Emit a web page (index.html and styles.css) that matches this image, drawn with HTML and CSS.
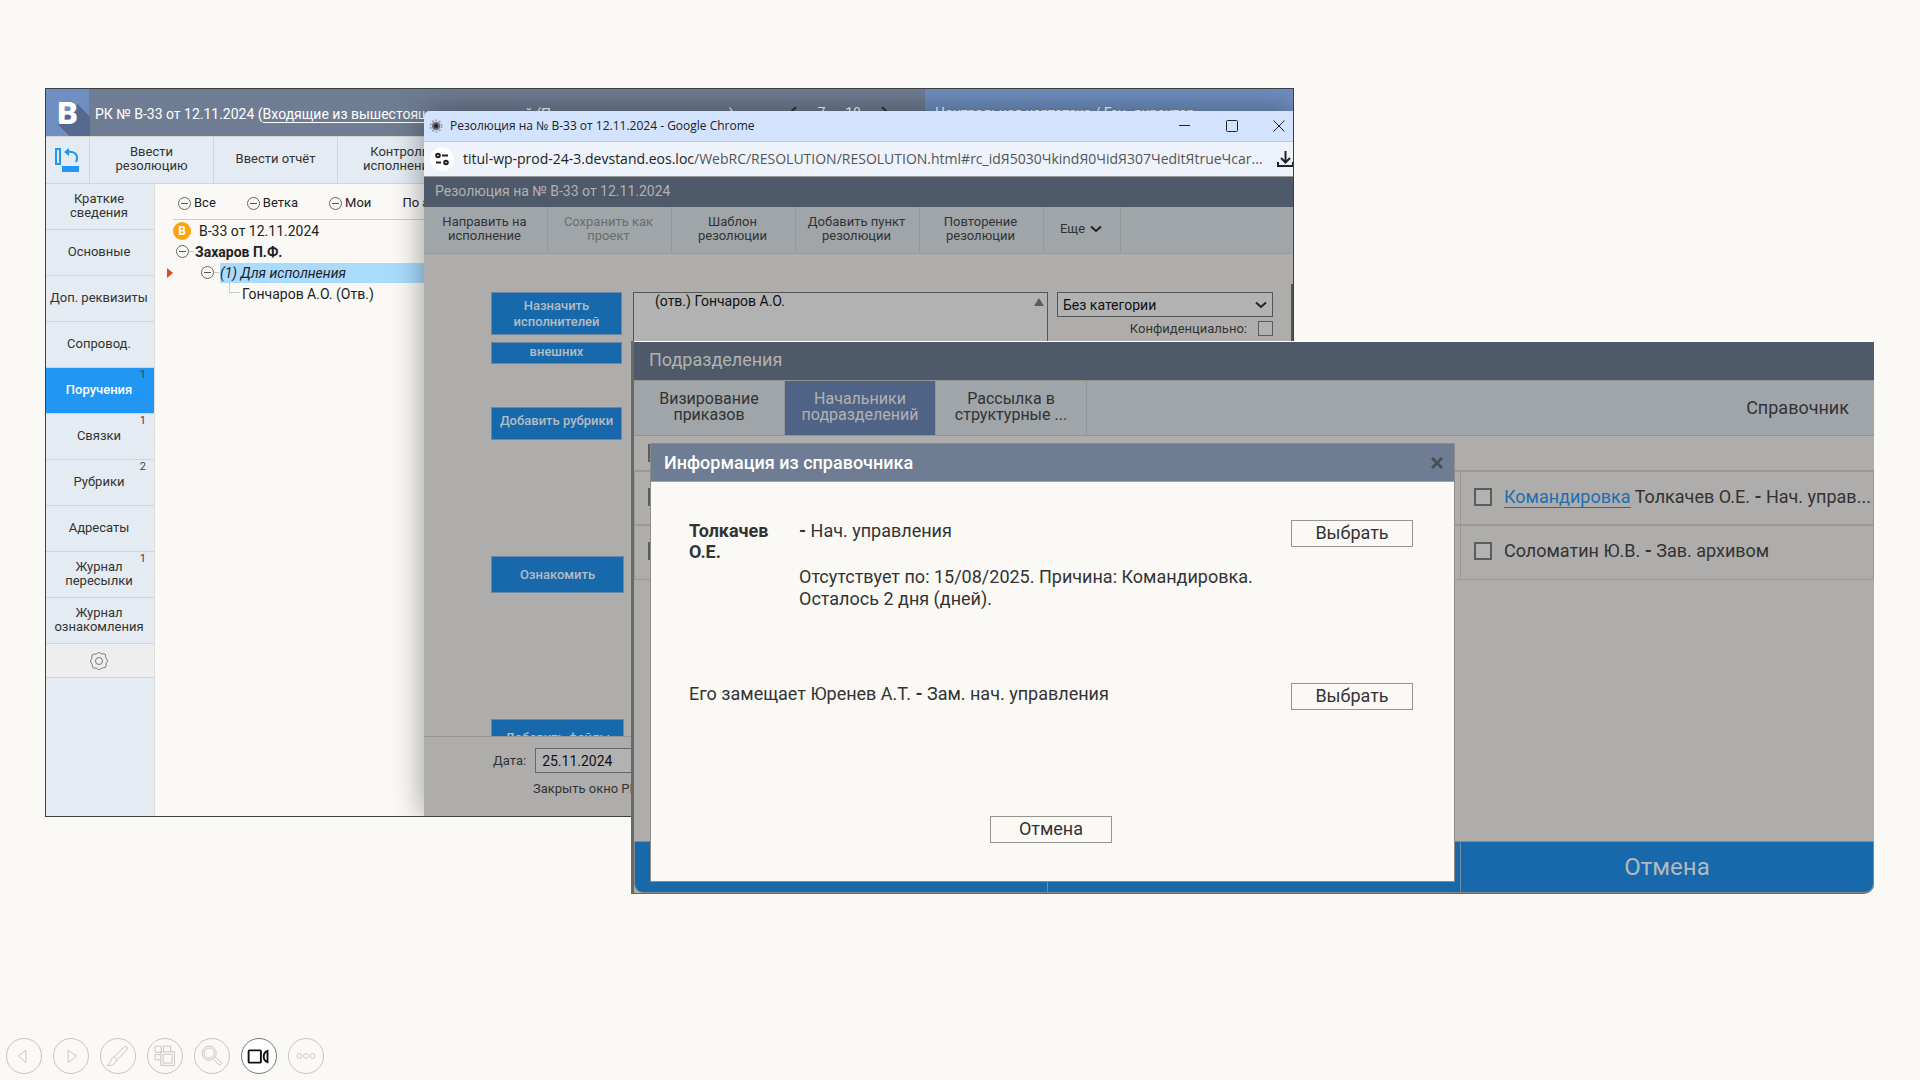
FILE: index.html
```html
<!DOCTYPE html>
<html lang="ru">
<head>
    <meta charset="UTF-8">
    <meta name="viewport" content="width=device-width, initial-scale=1.0">
    <title>Информация из справочника</title>
    <link rel="stylesheet" href="styles.css">
</head>
<body>
    <main class="stage">

        <!-- Registration card window -->
        <section class="card">
            <header class="card-header">
                <div class="logo">
                    <svg viewBox="0 0 43 46" aria-hidden="true"><path d="M31 15 L43 27 V46 H23 L11 34 Z" fill="#55698f"/></svg>
                    <span>В</span>
                </div>
                <p class="card-title">РК № В-33 от 12.11.2024 (<a href="#">Входящие из вышестоящих организаций</a> (Правительство и ведомства)</p>
                <div class="pager">
                    <svg viewBox="0 0 8 14" aria-hidden="true"><path d="M7 1 L1 7 L7 13"/></svg>
                    <span>7</span><span>18</span>
                    <svg viewBox="0 0 8 14" aria-hidden="true"><path d="M1 1 L7 7 L1 13"/></svg>
                </div>
                <p class="cabinet">Центральная картотека / Ген. директор</p>
            </header>

            <div class="card-toolbar">
                <button class="tool-icon" aria-label="Развернуть">
                    <svg viewBox="0 0 26 26" aria-hidden="true">
                        <rect x="2" y="2" width="4" height="15" fill="none" stroke="#2196f3" stroke-width="2"/>
                        <rect x="8" y="19" width="17" height="6" fill="#2196f3"/>
                        <path d="M14 5 C21 4 25 8 22 15" fill="none" stroke="#2196f3" stroke-width="2"/>
                        <path d="M10 5 L15 1 V9 Z" fill="#2196f3"/>
                    </svg>
                </button>
                <button class="tool">Ввести<br>резолюцию</button>
                <button class="tool">Ввести отчёт</button>
                <button class="tool">Контроль<br>исполнения</button>
            </div>

            <div class="card-body">
                <nav class="side">
                    <a href="#">Краткие<br>сведения</a>
                    <a href="#">Основные</a>
                    <a href="#">Доп. реквизиты</a>
                    <a href="#">Сопровод.</a>
                    <a href="#" class="active">Поручения<span class="count">1</span></a>
                    <a href="#">Связки<span class="count">1</span></a>
                    <a href="#">Рубрики<span class="count">2</span></a>
                    <a href="#">Адресаты</a>
                    <a href="#">Журнал<br>пересылки<span class="count">1</span></a>
                    <a href="#">Журнал<br>ознакомления</a>
                    <button class="gear" aria-label="Настройки">
                        <svg viewBox="0 0 20 20" aria-hidden="true">
                            <path d="M8.3 2.4 Q10 .4 11.7 2.4 Q12.8 3.4 14.2 2.7 Q16.8 2.7 16.7 5.2 Q16.3 6.8 17.6 7.8 Q19.6 9.8 17.8 11.5 Q16.6 12.6 17.2 14 Q17.3 16.7 14.7 16.8 Q13.2 16.5 12.2 17.7 Q10.2 19.7 8.4 17.8 Q7.3 16.6 5.8 17.2 Q3.2 17.2 3.2 14.7 Q3.5 13.2 2.3 12.1 Q.4 10 2.3 8.3 Q3.5 7.2 2.8 5.7 Q2.8 3 5.4 3 Q7.2 3.5 8.3 2.4 Z"/>
                            <circle cx="10" cy="10" r="3.5"/>
                        </svg>
                    </button>
                </nav>

                <div class="tree">
                    <div class="filters">
                        <button><i class="minus"></i>Все</button>
                        <button><i class="minus"></i>Ветка</button>
                        <button><i class="minus"></i>Мои</button>
                        <button>По автору</button>
                    </div>
                    <ul class="nodes">
                        <li class="root"><b class="badge">В</b>В-33 от 12.11.2024</li>
                        <li class="author"><i class="minus"></i><i class="dash"></i><strong>Захаров П.Ф.</strong></li>
                        <li class="current"><i class="arrow"></i><i class="minus"></i><i class="dash"></i><em>(1) Для исполнения</em></li>
                        <li class="leaf"><i class="corner"></i>Гончаров А.О. (Отв.)</li>
                    </ul>
                </div>
            </div>

            <!-- Resolution popup -->
            <section class="popup">
                <header class="popup-title">
                    <svg class="favicon" viewBox="0 0 14 14" aria-hidden="true">
                        <circle cx="7" cy="7" r="5.5" fill="none" stroke="#9aa3b3" stroke-width="2" stroke-dasharray="2 1.5"/>
                        <circle cx="7" cy="7" r="4" fill="#66696f"/><circle cx="7" cy="7" r="2" fill="#222"/>
                    </svg>
                    <span>Резолюция на № В-33 от 12.11.2024 - Google Chrome</span>
                    <div class="window-buttons">
                        <button aria-label="Свернуть"><svg viewBox="0 0 12 12"><path d="M0 5.5 H11"/></svg></button>
                        <button aria-label="Развернуть"><svg viewBox="0 0 12 12"><rect x=".5" y=".5" width="11" height="11" rx="1"/></svg></button>
                        <button aria-label="Закрыть"><svg viewBox="0 0 12 12"><path d="M.5 .5 L11.5 11.5 M11.5 .5 L.5 11.5"/></svg></button>
                    </div>
                </header>
                <div class="address">
                    <span class="site-info">
                        <svg viewBox="0 0 14 14" aria-hidden="true"><circle cx="3" cy="3.5" r="1.8"/><path d="M7 3.5 H13 M1 10.5 H6"/><circle cx="11" cy="10.5" r="1.8"/></svg>
                    </span>
                    <span class="url"><b>titul-wp-prod-24-3.devstand.eos.loc</b>/WebRC/RESOLUTION/RESOLUTION.html#rc_idЯ5030ЧkindЯ0ЧidЯ307ЧeditЯtrueЧcar...</span>
                    <svg class="download" viewBox="0 0 18 18" aria-hidden="true"><path d="M8.5 1 V12 M4 8 L8.5 12.5 L13 8 M1 12 V16 H16 V12"/></svg>
                </div>
                <h2 class="popup-heading">Резолюция на № В-33 от 12.11.2024</h2>
                <div class="popup-toolbar">
                    <button>Направить на<br>исполнение</button>
                    <button class="off">Сохранить как<br>проект</button>
                    <button>Шаблон<br>резолюции</button>
                    <button>Добавить пункт<br>резолюции</button>
                    <button>Повторение<br>резолюции</button>
                    <button class="more">Еще <svg viewBox="0 0 12 8" aria-hidden="true"><path d="M1 1.5 L6 6 L11 1.5"/></svg></button>
                </div>
                <div class="popup-form">
                    <div class="form-buttons">
                        <button class="tall">Назначить исполнителей</button>
                        <button class="slim">внешних</button>
                        <button class="rubrics">Добавить рубрики</button>
                        <button class="wide">Ознакомить</button>
                        <button class="wide">Добавить файлы</button>
                    </div>
                    <div class="executors">
                        <textarea aria-label="Исполнители" readonly>(отв.) Гончаров А.О.</textarea>
                        <i class="scroll-up"></i>
                    </div>
                    <div class="options">
                        <div class="category">
                            <select aria-label="Категория"><option>Без категории</option></select>
                            <svg viewBox="0 0 12 8" aria-hidden="true"><path d="M1 1.5 L6 6 L11 1.5"/></svg>
                        </div>
                        <label class="secret">Конфиденциально: <input type="checkbox"></label>
                    </div>
                    <i class="scrollbar"></i>
                </div>
                <footer class="popup-footer">
                    <label>Дата: <input type="text" value="25.11.2024"></label>
                    <p>Закрыть окно РК</p>
                </footer>
            </section>
        </section>

        <!-- Departments dialog -->
        <section class="dialog">
            <h2 class="dialog-title">Подразделения</h2>
            <nav class="tabs">
                <button>Визирование<br>приказов</button>
                <button class="active">Начальники<br>подразделений</button>
                <button>Рассылка в<br>структурные ...</button>
                <a href="#">Справочник</a>
            </nav>
            <div class="select-all"><input type="checkbox" aria-label="Выбрать всех"></div>
            <table class="people">
                <tr>
                    <td><input type="checkbox" aria-label="Сотрудник 1"></td>
                    <td><input type="checkbox" aria-label="Сотрудник 2"></td>
                    <td><input type="checkbox" id="tolkachev"><label for="tolkachev"><a href="#">Командировка</a> Толкачев О.Е. <b>-</b> Нач. управ...</label></td>
                </tr>
                <tr>
                    <td><input type="checkbox" aria-label="Сотрудник 3"></td>
                    <td><input type="checkbox" aria-label="Сотрудник 4"></td>
                    <td><input type="checkbox" id="solomatin"><label for="solomatin">Соломатин Ю.В. <b>-</b> Зав. архивом</label></td>
                </tr>
            </table>
            <footer class="dialog-footer">
                <button aria-label="Выбрать"></button>
                <button aria-label="Добавить"></button>
                <button>Отмена</button>
            </footer>

            <!-- Directory info -->
            <div class="modal">
                <header class="modal-header">
                    <h3>Информация из справочника</h3>
                    <button aria-label="Закрыть"><svg viewBox="0 0 12 12"><path d="M1 1 L11 11 M11 1 L1 11"/></svg></button>
                </header>
                <div class="modal-body">
                    <div class="person">
                        <strong>Толкачев О.Е.</strong>
                        <div class="post">
                            <p><b>-</b> Нач. управления</p>
                            <p>Отсутствует по: 15/08/2025. Причина: Командировка.<br>Осталось 2 дня (дней).</p>
                        </div>
                        <button class="plain">Выбрать</button>
                    </div>
                    <div class="person">
                        <p class="deputy">Его замещает Юренев А.Т. <b>-</b> Зам. нач. управления</p>
                        <button class="plain">Выбрать</button>
                    </div>
                    <button class="plain cancel">Отмена</button>
                </div>
            </div>
        </section>
    </main>

    <!-- Slide show controls -->
    <nav class="controls">
        <button aria-label="Назад"><svg viewBox="0 0 36 36"><path d="M12 18 L20 12 V25 Z"/></svg></button>
        <button aria-label="Вперёд"><svg viewBox="0 0 36 36"><path d="M15 12 L24 18 L15 25 Z"/></svg></button>
        <button aria-label="Перо"><svg viewBox="0 0 36 36"><path d="M27 8 Q29 10 27 12 L17 22 L14 19 L24 9 Q26 7 27 8 Z M14 19 Q10 20 10 24 L7 28 Q14 29 17 22"/></svg></button>
        <button aria-label="Все слайды"><svg viewBox="0 0 36 36"><path d="M13 22 H7.5 V16.5 H13 M7.5 7.5 H14 V14 H7.5 Z M16.5 13 V7.5 H24 V13 M13.5 13.5 H28 V28 H13.5 Z M16 16 H25.5 V25.5 H16 Z"/></svg></button>
        <button aria-label="Увеличить"><svg viewBox="0 0 36 36"><circle cx="15" cy="15" r="7.5"/><circle cx="15" cy="15" r="5.5"/><path d="M19 21 L25 27 Q27 28 28 26 Q28 25 27 24 L21 19"/></svg></button>
        <button class="camera" aria-label="Камера"><svg viewBox="0 0 36 36"><rect x="7" y="12" width="13" height="13" rx="1"/><path d="M27 12.5 V24.5 Q23 23 23 18.5 Q23 14 27 12.5 Z"/></svg></button>
        <button aria-label="Ещё"><svg viewBox="0 0 36 36"><circle cx="11" cy="18" r="2.5"/><circle cx="18" cy="18" r="2.5"/><circle cx="25" cy="18" r="2.5"/></svg></button>
    </nav>
</body>
</html>
```

FILE: styles.css
```css
/* General Styles */
* {
    box-sizing: border-box;
}

body {
    margin: 0;
    min-height: 100vh;
    display: flex;
    flex-direction: column;
    background: #faf9f5;
    color: #333;
    font-family: Roboto, sans-serif;
    font-size: 13px;
    line-height: 14px;
}

h2, h3, p, ul {
    margin: 0;
    padding: 0;
    font-weight: 400;
}

button, input, select, textarea {
    font: inherit;
    color: inherit;
    border-radius: 0;
    margin: 0;
}

button {
    padding: 0;
    border: 0;
    background: none;
    cursor: pointer;
}

a {
    color: inherit;
    text-decoration: none;
}

svg {
    display: block;
}

input[type="checkbox"] {
    appearance: none;
    flex: none;
    width: 18px;
    height: 18px;
    border: 2px solid #5c5c5b;
    background: #b2b2b2;
}

.stage {
    position: relative;
    flex: 1;
}

/* Registration card */
.card {
    position: absolute;
    left: 45px;
    right: 626px;
    top: 88px;
    min-height: 729px;
    display: flex;
    flex-direction: column;
    border: 1px solid #3e3f42;
    overflow: hidden;
}

.card-header {
    display: flex;
    align-items: center;
    height: 47px;
    background: #6f7d94;
    color: #fff;
    font-size: 14px;
    white-space: nowrap;
}

.logo {
    position: relative;
    width: 43px;
    height: 47px;
    background: #6f8fc0;
}

.logo svg {
    height: 47px;
}

.logo span {
    position: absolute;
    inset: 0;
    font-size: 32px;
    font-weight: 900;
    line-height: 48px;
    text-align: center;
}

.card-title {
    flex: 1;
    padding: 2px 0 0 6px;
}

.card-title a {
    border-bottom: 1px solid #fff;
}

.pager {
    display: flex;
    gap: 20px;
    margin-right: 36px;
}

.pager svg {
    width: 8px;
    fill: none;
    stroke: #333;
    stroke-width: 2;
}

.cabinet {
    align-self: stretch;
    width: 368px;
    padding-left: 10px;
    background: #6f8fc0;
    line-height: 48px;
}

.card-toolbar {
    display: flex;
    height: 48px;
    background: #e4ebf2;
    border-top: 1px solid #d5d5d0;
    border-bottom: 1px solid #d5d5d0;
}

.tool-icon {
    width: 43px;
    padding-left: 8px;
}

.tool-icon svg {
    width: 26px;
}

.tool {
    width: 124px;
    padding-bottom: 2px;
    border-left: 1px solid #d5d5d0;
}

.card-body {
    flex: 1;
    display: flex;
}

.side {
    width: 109px;
    background: #e4ebf2;
    border-right: 1px solid #dedcd8;
}

.side a {
    position: relative;
    display: flex;
    align-items: center;
    justify-content: center;
    height: 46px;
    padding: 0 2px 2px 0;
    border-bottom: 1px solid #d5d5d0;
    text-align: center;
    white-space: nowrap;
}

.side .active {
    background: #2196f3;
    color: #fff;
    font-weight: 500;
}

.count {
    position: absolute;
    top: 0;
    right: 8px;
    color: #444;
    font-size: 11px;
    font-weight: 400;
}

.gear {
    display: block;
    width: 100%;
    height: 34px;
    padding-right: 2px;
    background: #eee;
    border-bottom: 1px solid #d5d5d0;
}

.gear svg {
    width: 20px;
    margin: 0 auto;
    fill: none;
    stroke: #777;
    stroke-width: 1;
}

.tree {
    flex: 1;
    padding-left: 12px;
    color: #222;
}

.filters {
    display: flex;
    gap: 31px;
    height: 36px;
    margin-left: 6px;
    padding: 3px 0 0 5px;
    border-bottom: 1px solid #ccc;
    white-space: nowrap;
}

.filters button {
    display: flex;
    align-items: center;
    gap: 3px;
}

.minus {
    position: relative;
    flex: none;
    width: 13px;
    height: 13px;
    border: 1px solid #666;
    border-radius: 50%;
}

.minus::after {
    content: "";
    position: absolute;
    top: 5px;
    left: 2px;
    width: 7px;
    height: 1px;
    background: #555;
}

.nodes {
    list-style: none;
    font-size: 14px;
}

.nodes li {
    display: flex;
    align-items: center;
    height: 21px;
}

.nodes .root {
    padding-left: 6px;
    gap: 8px;
}

.badge {
    width: 18px;
    height: 18px;
    border-radius: 50%;
    background: #ffa20d;
    color: #fff;
    font-size: 12px;
    line-height: 18px;
    text-align: center;
}

.nodes .author {
    padding-left: 9px;
}

.dash {
    width: 5px;
    margin-right: 1px;
    border-top: 1px solid #ccc;
}

.arrow {
    width: 6px;
    margin-right: 28px;
    border: solid transparent;
    border-width: 5px 0 5px 6px;
    border-left-color: #dd4b26;
}

.current em {
    flex: 1;
    background: #a8dbfd;
    line-height: 20px;
}

.corner {
    align-self: flex-start;
    width: 11px;
    height: 10px;
    margin: 0 2px 0 62px;
    border: solid #ccc;
    border-width: 0 0 1px 1px;
}

/* Resolution popup */
.popup {
    position: absolute;
    left: 378px;
    right: 0;
    top: 22px;
    bottom: 0;
    display: flex;
    flex-direction: column;
    background: #aeadab;
    border-radius: 6px 0 0 0;
    box-shadow: 0 0 32px rgba(0, 0, 0, 0.4);
    overflow: hidden;
    white-space: nowrap;
}

.popup-title {
    display: flex;
    align-items: center;
    height: 31px;
    padding: 0 8px 0 5px;
    background: #d3e3fd;
    border-bottom: 1px solid #c3c9d3;
    color: #202124;
    font-family: "Open Sans", sans-serif;
    font-size: 12px;
}

.favicon {
    width: 14px;
    margin-right: 7px;
}

.window-buttons {
    display: flex;
    gap: 35px;
    margin-left: auto;
}

.window-buttons svg {
    width: 12px;
    fill: none;
    stroke: #222;
}

.address {
    display: flex;
    align-items: center;
    height: 34px;
    padding-left: 6px;
    background: #edf2fb;
    color: #555;
    font-family: "Open Sans", sans-serif;
    font-size: 14px;
}

.address b {
    color: #222;
    font-weight: 400;
}

.site-info {
    flex: none;
    width: 24px;
    height: 24px;
    margin-right: 9px;
    padding: 5px;
    border-radius: 50%;
    background: #fff;
}

.site-info svg,
.download {
    fill: none;
    stroke: #222;
    stroke-width: 2;
}

.download {
    width: 18px;
    flex: none;
    margin: 0 -2px 0 auto;
}

.popup-heading {
    height: 31px;
    padding-left: 11px;
    background: #4e5969;
    border-top: 1px solid #999;
    color: #b2b2b0;
    font-size: 14px;
    line-height: 28px;
}

.popup-toolbar {
    display: flex;
    height: 47px;
    background: #9fa5a9;
    border-bottom: 1px solid #999;
}

.popup-toolbar button {
    flex: none;
    width: 124px;
    padding: 0 2px 2px 0;
    border-right: 1px solid #949896;
}

.popup-toolbar .off {
    color: #6b6d6e;
}

.popup-toolbar .more {
    display: flex;
    align-items: center;
    justify-content: center;
    gap: 5px;
    width: 77px;
}

.more svg,
.category svg {
    width: 12px;
    fill: none;
    stroke: #222;
    stroke-width: 2;
}

.popup-form {
    position: relative;
    flex: 1;
    min-height: 0;
    display: grid;
    grid-template-columns: 133px 1fr 216px;
    gap: 9px;
    padding: 38px 20px 0 67px;
    overflow: hidden;
}

.form-buttons {
    display: grid;
    grid-template-rows: 50px 65px 149px 163px 37px;
    align-items: start;
}

.form-buttons button {
    width: 131px;
    height: 33px;
    background: #1869ab;
    border: 1px solid #6a87a3;
    color: #b4bcc3;
    font-weight: 500;
}

.form-buttons .tall {
    height: 43px;
    line-height: 16px;
    white-space: normal;
}

.form-buttons .slim {
    height: 22px;
    padding-bottom: 2px;
}

.form-buttons .rubrics {
    padding-bottom: 6px;
}

.form-buttons .wide {
    width: 133px;
    height: 37px;
}

.executors {
    position: relative;
}

.executors textarea {
    display: block;
    width: 100%;
    height: 100px;
    padding: 0 21px;
    background: #b2b2b2;
    border: 1px solid #555;
    color: #111;
    font-size: 14px;
    line-height: 16px;
    resize: none;
    overflow: hidden;
}

.scroll-up {
    position: absolute;
    top: 6px;
    right: 4px;
    border: solid transparent;
    border-width: 0 5px 8px;
    border-bottom-color: #5c5c5c;
}

.category {
    position: relative;
}

.category select {
    appearance: none;
    width: 100%;
    height: 25px;
    padding: 0 5px;
    background: #b2b2b2;
    border: 1px solid #555;
    color: #111;
    font-size: 14px;
}

.category svg {
    position: absolute;
    top: 9px;
    right: 6px;
}

.secret {
    display: flex;
    align-items: center;
    justify-content: flex-end;
    gap: 11px;
    margin-top: 4px;
}

.secret input[type="checkbox"] {
    width: 15px;
    height: 15px;
    border-width: 1px;
}

.scrollbar {
    position: absolute;
    top: 30px;
    right: 0;
    bottom: 0;
    width: 2px;
    background: #555;
}

.popup-footer {
    height: 80px;
    padding: 11px 20px 0 69px;
    border-top: 1px solid #969594;
}

.popup-footer label {
    display: flex;
    align-items: center;
    gap: 9px;
}

.popup-footer input {
    width: 130px;
    height: 25px;
    padding: 0 6px;
    background: #b2b2b2;
    border: 1px solid #666;
    color: #111;
    font-size: 14px;
}

.popup-footer p {
    margin: 9px 0 0 40px;
}

/* Departments dialog */
.dialog {
    position: absolute;
    left: 631px;
    right: 46px;
    top: 341px;
    min-height: 553px;
    display: flex;
    flex-direction: column;
    background: #aeadab;
    border: solid #696a68;
    border-width: 0 0 1px 3px;
    border-radius: 0 0 10px 0;
    font-size: 18px;
    line-height: 16px;
}

.dialog-title {
    height: 40px;
    padding-left: 15px;
    background: #4e5969;
    border-top: 1px solid #fff;
    border-bottom: 1px solid #929490;
    color: #b2b2b0;
    font-size: 18px;
    line-height: 36px;
}

.tabs {
    display: flex;
    align-items: center;
    height: 55px;
    background: #9fa5a9;
    border-bottom: 1px solid #929292;
}

.tabs button {
    width: 151px;
    height: 54px;
    padding-bottom: 2px;
    border-right: 1px solid #929799;
    font-size: 16px;
}

.tabs .active {
    background: #4f6387;
    color: #b2b2b0;
}

.tabs a {
    margin: 0 25px 0 auto;
}

.select-all {
    height: 34px;
    padding: 8px 14px;
}

.select-all input {
    display: block;
}

.people {
    width: 100%;
    table-layout: fixed;
    border-collapse: collapse;
}

.people td {
    height: 54px;
    padding: 0 0 2px 13px;
    border: 1px solid #999896;
    border-top-width: 2px;
    white-space: nowrap;
}

.people input,
.people label {
    vertical-align: middle;
}

.people label {
    margin-left: 12px;
}

.people a {
    color: #1f6fb0;
    border-bottom: 1px solid #1f6fb0;
}

.dialog-footer {
    display: flex;
    height: 52px;
    margin-top: auto;
    border: 1px solid #858788;
    border-radius: 0 0 9px 9px;
    overflow: hidden;
}

.dialog-footer button {
    flex: 1;
    background: #1869ab;
    color: #b2b9bf;
    font-size: 24px;
}

.dialog-footer button + button {
    border-left: 1px solid #7289a0;
}

/* Directory info */
.modal {
    position: absolute;
    left: 16px;
    right: 419px;
    top: 102px;
    bottom: 11px;
    display: flex;
    flex-direction: column;
    background: #faf9f5;
    border: 1px solid #8d8d86;
}

.modal-header {
    flex: none;
    display: flex;
    align-items: center;
    justify-content: space-between;
    height: 38px;
    padding: 0 11px 0 13px;
    background: #6f7d94;
    border-bottom: 1px solid #a5a59d;
    color: #fff;
}

.modal-header h3 {
    font-size: 18px;
    font-weight: 500;
}

.modal-header svg {
    width: 12px;
    fill: none;
    stroke: #4c5058;
    stroke-width: 3;
}

.modal-body {
    flex: 1;
    display: flex;
    flex-direction: column;
    padding: 38px 41px 38px 38px;
    line-height: 22px;
}

.person {
    display: flex;
    align-items: flex-start;
    min-height: 130px;
}

.person + .person {
    margin-top: 33px;
}

.person strong {
    width: 80px;
    margin-right: 30px;
    line-height: 21px;
}

.post,
.deputy {
    flex: 1;
}

.post p + p {
    margin-top: 24px;
}

.plain {
    width: 122px;
    height: 27px;
    padding-bottom: 2px;
    background: #faf9f5;
    border: 1px solid #96968f;
    line-height: 20px;
}

.cancel {
    margin: auto auto 0;
}

/* Slide show controls */
.controls {
    display: flex;
    gap: 11px;
    padding: 6px;
}

.controls button {
    width: 36px;
    height: 36px;
    border: 1px solid #c6c5c2;
    border-radius: 50%;
}

.controls svg {
    width: 34px;
    fill: none;
    stroke: #c6c5c2;
    stroke-width: 1;
}

.controls .camera {
    background: #fff;
    border-color: #777;
}

.camera svg {
    stroke: #111;
    stroke-width: 2;
}
```
